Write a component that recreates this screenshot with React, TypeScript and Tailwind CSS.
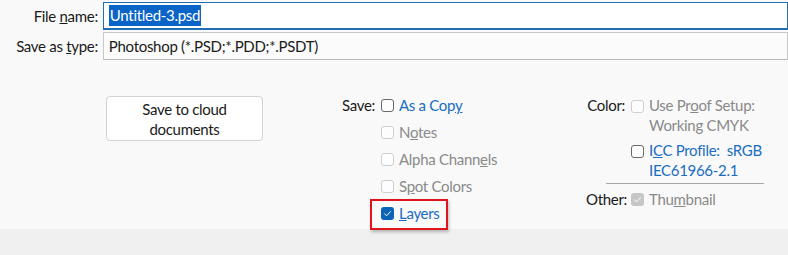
import React from "react";

const font = { fontFamily: 'Lato, "Open Sans", sans-serif' };

function Box({ state }: { state: "on" | "off" | "dim" | "dimOn" }) {
  if (state === "on" || state === "dimOn") {
    const bg = state === "on" ? "bg-[#0a64b8]" : "bg-[#c6c6c6]";
    return (
      <span className={`flex h-[13px] w-[13px] shrink-0 items-center justify-center rounded-[3px] ${bg}`}>
        <svg viewBox="0 0 13 13" className="h-[13px] w-[13px]">
          <path d="M3.6 6.8 L5.6 8.8 L9.4 4.6" fill="none" stroke="#fff" strokeWidth="1" strokeLinecap="round" strokeLinejoin="round" />
        </svg>
      </span>
    );
  }
  const border = state === "off" ? "border-[#6a6a6a]" : "border-[#cfcfcf]";
  return <span className={`block h-[13px] w-[13px] shrink-0 rounded-[3px] border bg-[#fdfdfd] ${border}`} />;
}

function Row({
  box,
  children,
  tone,
}: {
  box: "on" | "off" | "dim" | "dimOn";
  children: React.ReactNode;
  tone: "link" | "dim";
}) {
  return (
    <div className="flex h-[27px] w-fit items-center gap-[5px] whitespace-nowrap">
      <Box state={box} />
      <span className={tone === "link" ? "text-[#1a6dc0]" : "text-[#8a8a8a]"}>{children}</span>
    </div>
  );
}

export default function App() {
  return (
    <div
      style={font}
      className="flex h-[255px] w-[788px] flex-col overflow-hidden bg-[#f9f9f9] text-[15px] tracking-[-0.3px] text-[#1a1a1a]"
    >
      <div className="h-[229px]">
        {/* file name */}
        <div className="mt-[2px] flex h-[28px] items-center">
          <span className="w-[100px] whitespace-nowrap text-right">
            File <u>n</u>ame:
          </span>
          <div className="ml-[5px] flex h-[28px] w-[700px] items-center border border-[#1f6fb5] border-b-2 bg-white pl-[5px]">
            <span className="bg-[#0a64c8] px-[1px] leading-[21px] text-white">Untitled-3.psd</span>
          </div>
        </div>

        {/* type */}
        <div className="mt-[2px] flex h-[28px] items-center">
          <span className="w-[100px] whitespace-nowrap text-right">
            Save as <u>t</u>ype:
          </span>
          <div className="ml-[5px] flex h-[28px] w-[700px] items-center border border-[#c8c8c8] border-b-[#b8b8b8] bg-[#fbfbfb] pl-[5px]">
            Photoshop (*.PSD;*.PDD;*.PSDT)
          </div>
        </div>

        {/* options */}
        <div className="mt-[32px] flex">
          <button className="ml-[106px] mt-[4px] h-[45px] w-[157px] shrink-0 rounded-[4px] border border-[#d2d2d2] bg-white leading-[20px]">
            Save to cloud
            <br />
            documents
          </button>

          <div className="ml-[78px] flex w-[245px] shrink-0 gap-[6px]">
            <span className="w-[34px] text-right leading-[27px]">Save:</span>
            <div>
              <Row box="off" tone="link">
                As a Cop<u>y</u>
              </Row>
              <Row box="dim" tone="dim">
                N<u>o</u>tes
              </Row>
              <Row box="dim" tone="dim">
                Alpha Chann<u>e</u>ls
              </Row>
              <Row box="dim" tone="dim">
                S<u>p</u>ot Colors
              </Row>
              <div className="relative w-fit">
                <Row box="on" tone="link">
                  <u>L</u>ayers
                </Row>
                <div className="absolute left-[-11px] right-[-8px] top-[-1px] bottom-[-3px] border-2 border-[#e0141c] shadow-[1px_2px_3px_rgba(0,0,0,0.25)]" />
              </div>
            </div>
          </div>

          <div className="mt-[3px] shrink-0 whitespace-nowrap leading-[20px]">
            <div className="flex gap-[6px]">
              <span className="w-[39px] text-right">Color:</span>
              <div>
                <div className="flex gap-[5px]">
                  <span className="mt-[5px]">
                    <Box state="dim" />
                  </span>
                  <span className="text-[#8a8a8a]">
                    Use Pr<u>o</u>of Setup:
                    <br />
                    Working CMYK
                  </span>
                </div>
                <div className="mt-[5px] flex gap-[5px]">
                  <span className="mt-[5px]">
                    <Box state="off" />
                  </span>
                  <span className="text-[#1a6dc0]">
                    I<u>C</u>C Profile:&nbsp; sRGB
                    <br />
                    IEC61966-2.1
                  </span>
                </div>
              </div>
            </div>
            <div className="ml-[20px] mt-[3px] h-px w-[158px] bg-[#a8a8a8]" />
            <div className="mt-[5px] flex gap-[6px]">
              <span className="w-[39px] text-right">Other:</span>
              <span className="mt-[4px]">
                <Box state="dimOn" />
              </span>
              <span className="-ml-px text-[#8a8a8a]">
                Thu<u>m</u>bnail
              </span>
            </div>
          </div>
        </div>
      </div>
      <div className="flex-1 bg-[#f0f0f0]" />
    </div>
  );
}
